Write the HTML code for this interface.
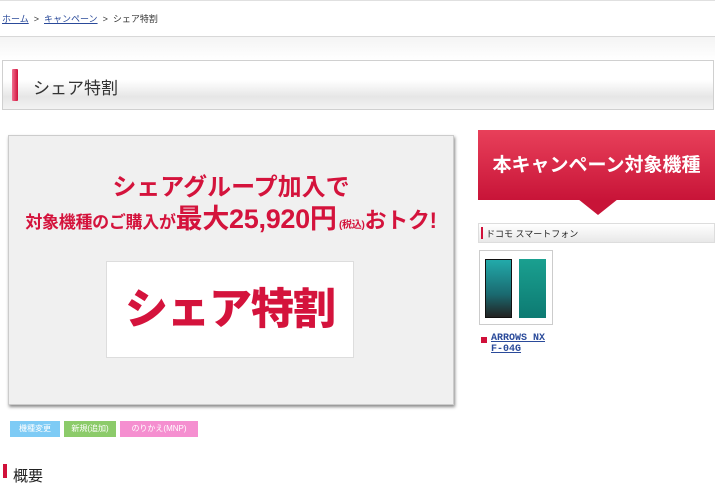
<!DOCTYPE html>
<html><head><meta charset="utf-8"><style>
*{margin:0;padding:0;box-sizing:border-box}
body{width:715px;height:476px;overflow:hidden;background:#fff;font-family:"Liberation Sans","Noto Sans CJK JP",sans-serif;position:relative}
.a{position:absolute}
</style></head><body>
<div class="a" style="left:355px;top:0;width:111px;height:1px;background:#b0255a"></div>
<div class="a" style="left:0;top:0;width:715px;height:1px;background:#e0e0e0"></div>
<div class="a" style="left:2px;top:12px;font-size:9px;color:#333;white-space:nowrap">
<span style="color:#2a4a9a;text-decoration:underline">ホーム</span>&nbsp; &gt; &nbsp;<span style="color:#2a4a9a;text-decoration:underline">キャンペーン</span>&nbsp; &gt; &nbsp;シェア特割</div>
<div class="a" style="left:0;top:36px;width:715px;height:24px;border-top:1px solid #d8d8d8;background:linear-gradient(#f4f4f4,#fff)"></div>
<div class="a" style="left:2px;top:60px;width:712px;height:50px;border:1px solid #d0d0d0;background:linear-gradient(#fff 0%,#fff 40%,#e6e6e6 75%,#f2f2f2 100%)"></div>
<div class="a" style="left:12px;top:69px;width:6px;height:32px;background:linear-gradient(90deg,#f07090,#d0103a);border-radius:1px"></div>
<div class="a" style="left:33px;top:74px;font-size:17px;color:#333">シェア特割</div>

<div class="a" style="left:8px;top:135px;width:446px;height:270px;background:#f0f0f0;border:1px solid #ccc;box-shadow:1px 2px 3px #888"></div>
<div class="a" style="left:8px;top:167px;width:446px;text-align:center;color:#d4133c;font-weight:bold;font-size:24px;white-space:nowrap">シェアグループ加入で</div>
<div class="a" style="left:8px;top:197px;width:446px;text-align:center;color:#d4133c;font-weight:bold;font-size:17px;white-space:nowrap;letter-spacing:-0.3px">対象機種のご購入が<span style="font-size:27px">最大25,920円</span><span style="font-size:10px"> (税込)</span><span style="font-size:22px">おトク!</span></div>
<div class="a" style="left:106px;top:261px;width:248px;height:97px;background:#fff;border:1px solid #ddd"></div>
<div class="a" style="left:106px;top:286px;width:248px;text-align:center;color:#d4133c;font-weight:900;font-size:43px;white-space:nowrap;line-height:48px;letter-spacing:-1px">シェア特割</div>

<div class="a" style="left:10px;top:421px;width:50px;height:16px;background:#7ecbf5;color:#fff;font-size:8px;text-align:center;line-height:16px">機種変更</div>
<div class="a" style="left:64px;top:421px;width:52px;height:16px;background:#8ccb6a;color:#fff;font-size:8px;text-align:center;line-height:16px">新規(追加)</div>
<div class="a" style="left:120px;top:421px;width:78px;height:16px;background:#f58fd0;color:#fff;font-size:8px;text-align:center;line-height:16px">のりかえ(MNP)</div>
<div class="a" style="left:3px;top:464px;width:4px;height:14px;background:#d0103a"></div>
<div class="a" style="left:13px;top:465px;font-size:15px;color:#222">概要</div>

<div class="a" style="left:478px;top:130px;width:237px;height:70px;background:linear-gradient(#e8405a,#c81438)"></div>
<div class="a" style="left:578px;top:199px;width:0;height:0;border-left:20px solid transparent;border-right:20px solid transparent;border-top:16px solid #c81438"></div>
<div class="a" style="left:478px;top:150px;width:237px;text-align:center;color:#fff;font-weight:bold;font-size:19px;white-space:nowrap">本キャンペーン対象機種</div>
<div class="a" style="left:478px;top:223px;width:237px;height:20px;border:1px solid #ddd;background:linear-gradient(#fff,#e8e8e8)"></div>
<div class="a" style="left:481px;top:227px;width:2px;height:12px;background:#d0103a"></div>
<div class="a" style="left:486px;top:227px;font-size:9px;color:#222">ドコモ スマートフォン</div>
<div class="a" style="left:479px;top:250px;width:74px;height:75px;border:1px solid #ccc;background:#fff"></div>
<div class="a" style="left:485px;top:259px;width:27px;height:59px;background:linear-gradient(#2aa,#1a6a70 60%,#222);border:1px solid #111"></div>
<div class="a" style="left:519px;top:259px;width:27px;height:59px;background:linear-gradient(#1aa090,#0d7a72)"></div>
<div class="a" style="left:481px;top:337px;width:6px;height:6px;background:#d0103a"></div>
<div class="a" style="left:491px;top:333px;font-size:10px;font-weight:bold;color:#2a4a9a;text-decoration:underline;line-height:11px;font-family:'Liberation Mono',monospace">ARROWS NX<br>F-04G</div>
</body></html>
